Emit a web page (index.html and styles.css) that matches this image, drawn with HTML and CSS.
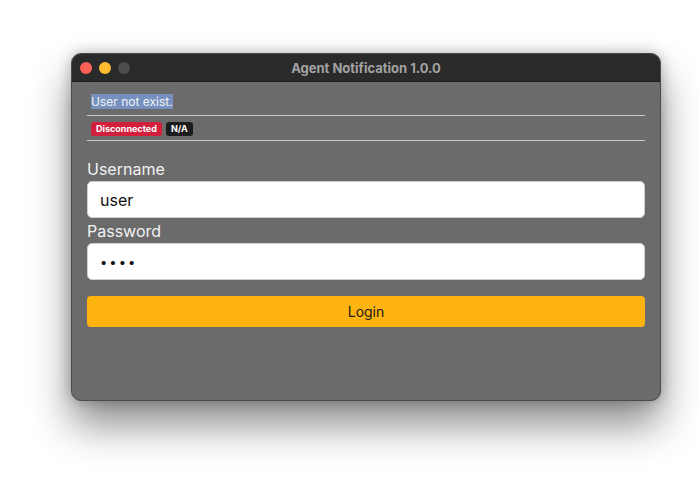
FILE: index.html
```html
<!DOCTYPE html>
<html>
<head>
<meta charset="utf-8">
<link rel="stylesheet" href="styles.css">
</head>
<body>
<div class="window">
  <div class="titlebar">
    <div class="lights">
      <span class="light red"></span>
      <span class="light yellow"></span>
      <span class="light grey"></span>
    </div>
    <div class="title">Agent Notification 1.0.0</div>
  </div>
  <div class="content">
    <div class="message"><span class="selected">User not exist.</span></div>
    <div class="status">
      <span class="badge badge-red">Disconnected</span>
      <span class="badge badge-dark">N/A</span>
    </div>
    <form class="form">
      <label class="label">Username</label>
      <div class="input">user</div>
      <label class="label">Password</label>
      <div class="input dots">••••</div>
      <div class="button">Login</div>
    </form>
  </div>
</div>
</body>
</html>
```
FILE: styles.css
```css
html, body {
  margin: 0;
  background: #ffffff;
}
body {
  min-height: 100vh;
  box-sizing: border-box;
  padding: 53px 0 0 71px;
  font-family: Inter, "Liberation Sans", sans-serif;
}
.window {
  width: 590px;
  height: 348px;
  box-sizing: border-box;
  border-radius: 10px;
  background: #6b6b6b;
  border: 1px solid #4a4a4a;
  box-shadow: 0 24px 40px rgba(0,0,0,0.45), 0 0 14px rgba(0,0,0,0.25);
  overflow: hidden;
  display: flex;
  flex-direction: column;
}
.titlebar {
  height: 27px;
  background: #2a2a2a;
  border-bottom: 1px solid #1c1c1c;
  position: relative;
  display: flex;
  align-items: center;
}
.lights {
  display: flex;
  gap: 7px;
  padding-left: 8px;
}
.light {
  width: 12px;
  height: 12px;
  border-radius: 50%;
  display: block;
}
.red { background: #fe5f57; }
.yellow { background: #febc2e; }
.grey { background: #4d4d4d; }
.title {
  position: absolute;
  left: 0;
  right: 0;
  text-align: center;
  color: #a3a3a3;
  font-weight: 700;
  font-size: 13px;
}
.content {
  padding: 11px 15px 0 15px;
}
.message {
  font-size: 12px;
  line-height: 18px;
  padding: 0 0 4px 4px;
  border-bottom: 1px solid #c8c8c8;
}
.selected {
  background: #7691c0;
  color: #f2f2f2;
}
.status {
  display: flex;
  gap: 4px;
  padding: 6px 4px 4px;
  border-bottom: 1px solid #c8c8c8;
}
.badge {
  font-size: 9px;
  font-weight: 700;
  color: #fff;
  padding: 1px 5px;
  border-radius: 3px;
  line-height: 12px;
}
.badge-red { background: #d21f3c; }
.badge-dark { background: #1c1c1c; }
.form {
  display: flex;
  flex-direction: column;
  padding-top: 17px;
}
.label {
  color: #f2f2f2;
  font-size: 16px;
  line-height: 23px;
}
.input {
  height: 37px;
  box-sizing: border-box;
  background: #ffffff;
  border: 1px solid #cfcfcf;
  border-radius: 5px;
  padding: 0 12px;
  display: flex;
  align-items: center;
  font-size: 16px;
  color: #111;
  margin-bottom: 2px;
}
.dots {
  font-size: 13px;
  letter-spacing: 2px;
}
.button {
  margin-top: 14px;
  height: 31px;
  background: #ffb30f;
  border-radius: 4px;
  display: flex;
  align-items: center;
  justify-content: center;
  font-size: 14px;
  color: #1a1a1a;
}
```
